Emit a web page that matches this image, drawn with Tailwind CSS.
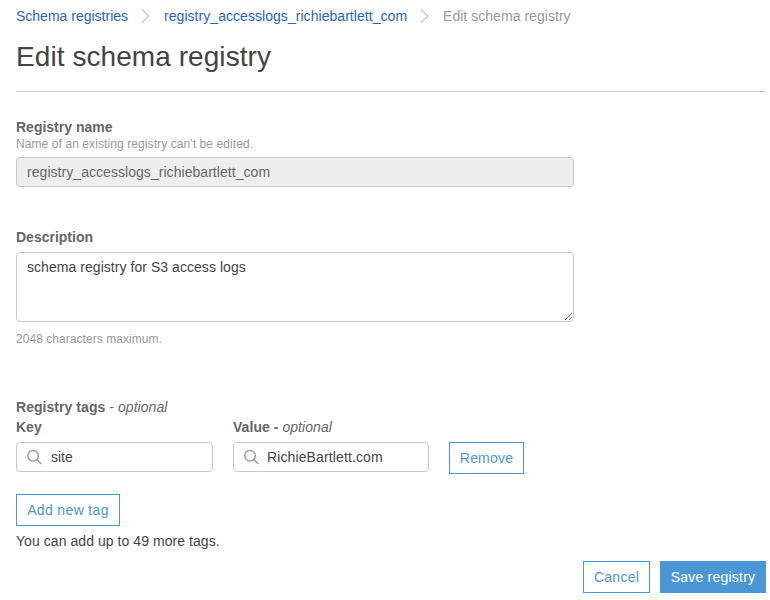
<!DOCTYPE html>
<html lang="en">
<head>
<meta charset="utf-8">
<title>Edit schema registry</title>
<script src="https://cdn.jsdelivr.net/npm/@tailwindcss/browser@4"></script>
</head>
<body class="h-[600px] overflow-hidden bg-white pl-4 pr-1 pt-1.5 font-['Helvetica_Neue','Liberation_Sans',Arial,sans-serif] text-sm text-[#444]">
  <nav class="flex h-5 items-center leading-5 whitespace-nowrap">
    <a class="w-[112px] text-[#2a62c0]">Schema registries</a>
    <svg class="ml-[13px] mr-[13px] h-4 w-[10px] shrink-0" viewBox="0 0 10 16" fill="none" stroke="#c9c9c9" stroke-width="1.4"><path d="M.8 1.2 7.8 8 .8 14.8"/></svg>
    <a class="w-[243px] tracking-[0.05px] text-[#2a62c0]">registry_accesslogs_richiebartlett_com</a>
    <svg class="ml-[13px] mr-[13px] h-4 w-[10px] shrink-0" viewBox="0 0 10 16" fill="none" stroke="#c9c9c9" stroke-width="1.4"><path d="M.8 1.2 7.8 8 .8 14.8"/></svg>
    <span class="tracking-[0.04px] text-[#999]">Edit schema registry</span>
  </nav>
  <h1 class="mt-[13px] text-[28px] leading-9 tracking-[0.07px]">Edit schema registry</h1>
  <hr class="mt-4 border-[#ccc]">

  <form>
    <section class="mt-[26px] w-[558px]">
      <label class="block font-bold leading-[18px] text-[#666]">Registry name</label>
      <p class="text-xs leading-4 tracking-[0.09px] text-[#999]">Name of an existing registry can't be edited.</p>
      <div class="mt-[5px] h-[30px] rounded border border-[#c8c8c8] bg-[#eee] px-2.5 pt-1 leading-5 tracking-[0.05px] text-[#666]">registry_accesslogs_richiebartlett_com</div>
    </section>

    <section class="mt-[41px] w-[558px]">
      <label class="block font-bold leading-[18px] text-[#666]">Description</label>
      <textarea class="mt-1.5 block h-[70px] w-full resize rounded border border-[#c8c8c8] px-2.5 py-1 leading-5 tracking-[0.05px] text-[#444]">schema registry for S3 access logs</textarea>
      <p class="mt-[9px] text-xs leading-4 tracking-[0.05px] text-[#999]">2048 characters maximum.</p>
    </section>

    <section class="mt-[51px]">
      <h2 class="leading-[18px] tracking-[0.05px] text-[#666]"><b>Registry tags</b> - <i>optional</i></h2>
      <div class="mt-0.5 flex">
        <div class="w-[197px]">
          <label class="block font-bold leading-[18px] text-[#666]">Key</label>
          <div class="mt-1.5 flex h-[30px] items-center rounded border border-[#c8c8c8] pl-2.5">
            <svg class="h-4 w-4" viewBox="0 0 16 16" fill="none" stroke="#999" stroke-width="1.4"><circle cx="6.1" cy="6.8" r="5.3"/><path d="m9.9 10.7 4.4 4.3"/></svg>
            <span class="ml-2 leading-5">site</span>
          </div>
        </div>
        <div class="ml-5 w-[196px]">
          <label class="block leading-[18px] tracking-[0.05px] text-[#666]"><b>Value -</b> <i>optional</i></label>
          <div class="mt-1.5 flex h-[30px] items-center rounded border border-[#c8c8c8] pl-2.5">
            <svg class="h-4 w-4" viewBox="0 0 16 16" fill="none" stroke="#999" stroke-width="1.4"><circle cx="6.1" cy="6.8" r="5.3"/><path d="m9.9 10.7 4.4 4.3"/></svg>
            <span class="ml-[7px] leading-5 tracking-[0.12px]">RichieBartlett.com</span>
          </div>
        </div>
        <button type="button" class="ml-5 mt-6 h-8 w-[75px] border border-[#4b97d6] tracking-[0.2px] text-[#4b97d6]">Remove</button>
      </div>
      <button type="button" class="mt-5 block h-8 w-[104px] border border-[#4b97d6] tracking-[0.35px] text-[#4b97d6]">Add new tag</button>
      <p class="mt-[5px] leading-5 tracking-[0.06px]">You can add up to 49 more tags.</p>
    </section>

    <footer class="mt-2.5 flex justify-end gap-2.5">
      <button type="button" class="h-8 w-[67px] border border-[#4b97d6] tracking-[0.25px] text-[#4b97d6]">Cancel</button>
      <button type="button" class="h-8 w-[106px] bg-[#4b97d6] tracking-[0.22px] text-white">Save registry</button>
    </footer>
  </form>
</body>
</html>
